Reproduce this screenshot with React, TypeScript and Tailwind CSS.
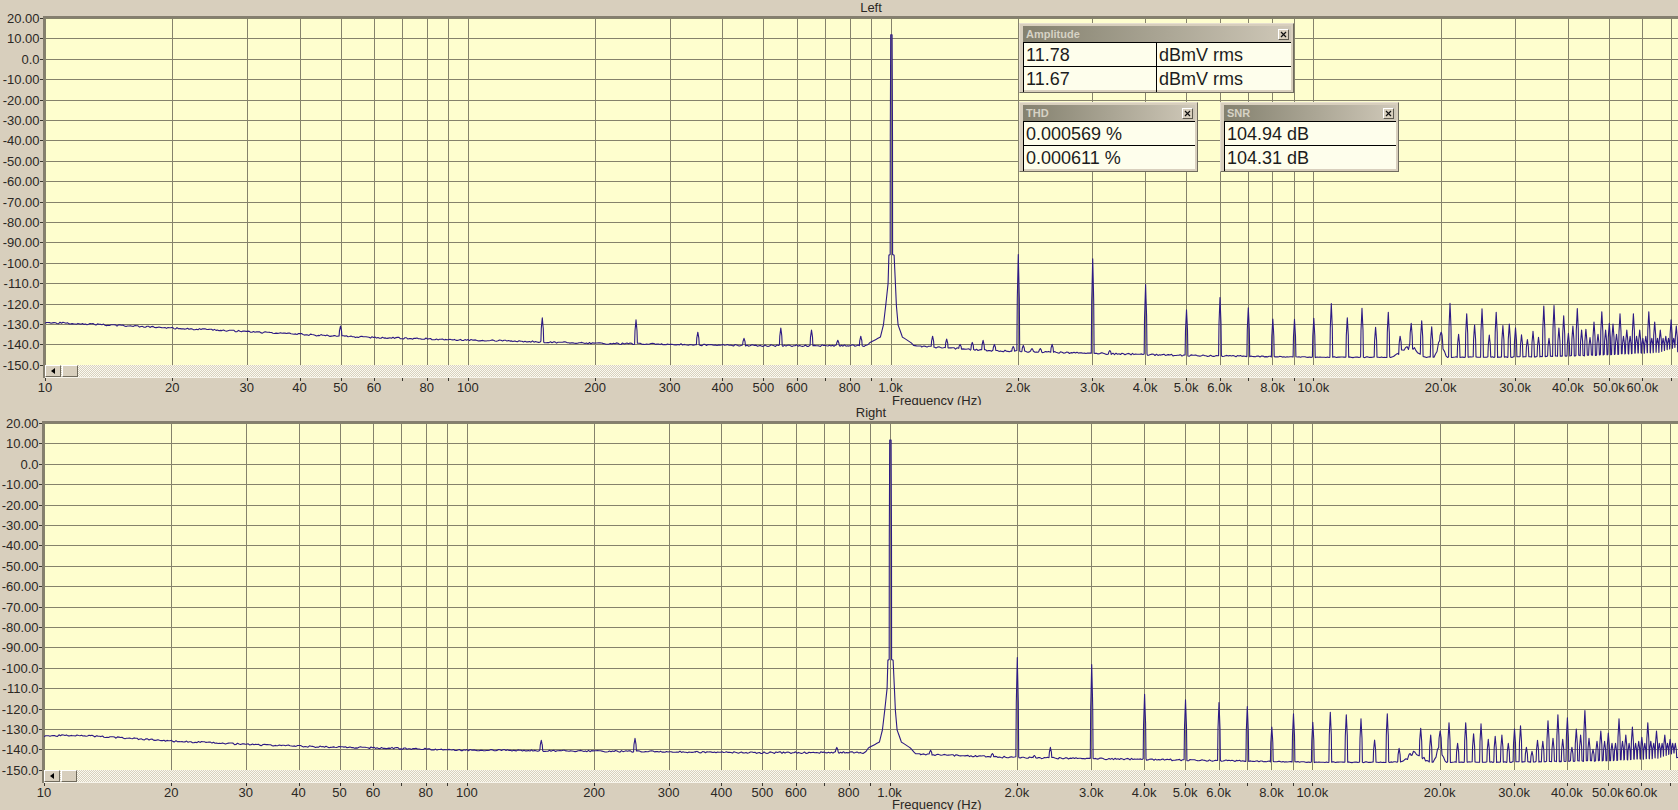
const DECADE = 422.8;
const DB_PX = 2.04;
const PLOT_W = 1640;
const PLOT_H = 347;

const GRID_FREQS = [
  10, 20, 30, 40, 50, 60, 70, 80, 90, 100, 200, 300, 400, 500, 600, 700, 800, 900, 1000, 2000, 3000, 4000, 5000, 6000,
  7000, 8000, 9000, 10000, 20000, 30000, 40000, 50000, 60000, 70000,
];
const X_LABELS: [number, string][] = [
  [10, "10"], [20, "20"], [30, "30"], [40, "40"], [50, "50"], [60, "60"], [80, "80"], [100, "100"],
  [200, "200"], [300, "300"], [400, "400"], [500, "500"], [600, "600"], [800, "800"],
  [1000, "1.0k"], [2000, "2.0k"], [3000, "3.0k"], [4000, "4.0k"], [5000, "5.0k"], [6000, "6.0k"], [8000, "8.0k"],
  [10000, "10.0k"], [20000, "20.0k"], [30000, "30.0k"], [40000, "40.0k"], [50000, "50.0k"], [60000, "60.0k"],
];
const Y_LABELS = [
  "20.00", "10.00", "0.0", "-10.00", "-20.00", "-30.00", "-40.00", "-50.00", "-60.00", "-70.00", "-80.00", "-90.00",
  "-100.0", "-110.0", "-120.0", "-130.0", "-140.0", "-150.0",
];

// measured off the plots: [freq, dB]
const LEFT = {
  top: 11.78,
  floor: [
    [10, -129.3], [12, -129.8], [20, -132], [30, -133.7], [40, -135], [50, -136], [60, -136.6], [100, -137.8], [200, -139.5],
    [500, -140.6], [800, -140.6], [1200, -141], [1700, -143], [3000, -144.4], [5000, -145.4], [10000, -146.3], [30000, -146.2],
    [45000, -145.4], [70000, -143.6],
  ],
  bumps: [[16800, 16, 6], [20000, 6, 9]],
  spurs: [
    [50, -131], [150, -127], [250, -128], [350, -134], [450, -137], [550, -132], [650, -133], [750, -138], [850, -136],
    [1257, -136], [1357, -137.4], [1460, -140], [1560, -139], [1655, -138], [1760, -140], [1950, -141], [2060, -140.5],
    [2160, -142], [2260, -142], [2410, -140], [3300, -143],
  ],
  harmonics: [
    -96, -98, -110.7, -123, -117, -122, -127.6, -127.7, -127.2, -120, -127, -122.3, -131.6, -124.3, -136, -129.7, -128.5,
    -131.3, -134, -119.9, -135, -125, -130.5, -122.6, -135.4, -124.2, -130.8, -130, -131.8, -135.3, -137.6, -133.6, -136.5,
    -121.2, -137, -121, -132, -126, -134.5, -131, -122.4, -133, -132.6, -136.6, -129, -135, -124, -133, -129.7, -130, -135,
    -125, -136, -133, -136, -125, -136, -133, -137, -136, -124, -137, -129, -137, -133, -137, -136, -137, -128, -137, -131,
  ],
};

const RIGHT = {
  top: 11.67,
  floor: [
    [10, -133.4], [12, -133], [20, -135.9], [30, -137.5], [40, -138.4], [50, -139], [60, -139.2], [100, -140.3], [500, -141.6],
    [800, -141.5], [1200, -142.4], [2000, -144], [5000, -145.2], [10000, -146.3], [30000, -146.2], [50000, -145.5], [70000, -144],
  ],
  bumps: [[17500, 14, 5], [20000, 6, 8]],
  spurs: [
    [50, -138.6], [150, -135.6], [250, -134.6], [350, -141], [750, -139], [1250, -140.4], [1750, -142], [2200, -143], [2400, -139],
  ],
  harmonics: [
    -95, -98.4, -113, -115.7, -117, -119, -129, -122.6, -126.7, -121.8, -123, -125, -135.4, -122.6, -139.5, -142, -129.7, -133,
    -131, -126.9, -137, -127, -132.4, -127.5, -135, -133.6, -133, -137, -130, -128.5, -139, -141, -135.5, -136, -126, -134.5,
    -123, -135, -124.5, -139, -130, -133, -121, -134.5, -140, -136, -131, -136, -132, -137, -137, -125, -136, -133, -137, -129,
    -137, -136, -134, -137, -127, -136, -137, -131, -137, -137, -133, -137, -135, -137, -137,
  ],
};

// skirt of the 1 kHz fundamental: [px from centre, dB], the top is filled in per channel
const SKIRT = [
  [-30, -145], [-22, -139.3], [-11, -136.4], [-8, -130.5], [-5.7, -121], [-3.3, -110], [-2.5, -96.2], [-1.2, -96], [-1.1, -38],
  [-0.7, 0], [0.7, 0], [1.1, -38], [1.2, -96], [2.7, -96.2], [4, -110], [5, -121], [6.7, -130.5], [11, -136.4], [20, -139.3], [30, -145],
];

const px = (f: number) => (Math.log10(f) - 1) * DECADE;
const py = (db: number) => (20 - db) * DB_PX;
const rnd = (n: number) => {
  const v = Math.sin(n * 12.9898) * 43758.5453;
  return v - Math.floor(v);
};

function lerp(points: number[][], x: number) {
  if (x <= points[0][0]) return points[0][1];
  for (let i = 1; i < points.length; i++) {
    if (x <= points[i][0]) {
      const [x0, y0] = points[i - 1];
      const [x1, y1] = points[i];
      return y0 + ((y1 - y0) * (x - x0)) / (x1 - x0);
    }
  }
  return points[points.length - 1][1];
}

function buildTrace(ch: typeof LEFT) {
  const floorPts = ch.floor.map(([f, db]) => [px(f), db]);
  const bumps = ch.bumps.map(([f, w, h]) => [px(f), w, h]);
  const peaks = [
    ...ch.spurs.map(([f, db]) => [px(f), db]),
    ...ch.harmonics.map((db, i) => [px((i + 2) * 1000) + 0.4, db]),
  ];
  const centre = px(1000) + 0.8;
  const skirt = SKIRT.map(([d, db]) => [centre + d, Math.abs(d) === 0.7 ? ch.top : db]);

  const xs = new Set<number>();
  for (let x = 0; x < PLOT_W; x += 1.5) xs.add(x);
  peaks.forEach(([x]) => [-1.4, -1, 0, 1, 1.4].forEach((d) => xs.add(x + d)));
  skirt.forEach(([x]) => xs.add(x));

  const floorAt = (x: number) => {
    let v = lerp(floorPts, x);
    bumps.forEach(([c, w, h]) => {
      const d = Math.abs(x - c);
      if (d < w) v += h * (1 - d / w) * (0.5 + rnd(Math.round(x)) * 0.8);
    });
    return v;
  };

  const pts = [...xs].sort((a, b) => a - b).map((x) => {
    const base = floorAt(x);
    let v = base + (rnd(Math.round(x * 2)) - 0.5) * (x < 1200 ? 0.8 : 0.4);
    for (const [c, db] of peaks) {
      const d = Math.abs(x - c);
      if (d >= 1.4) continue;
      const mid = base + (db - base) * 0.55;
      const s = d <= 1 ? db + ((mid - db) * d) / 1 : mid + ((base - mid) * (d - 1)) / 0.4;
      v = Math.max(v, s);
    }
    if (x > skirt[0][0] && x < skirt[skirt.length - 1][0]) v = Math.max(v, lerp(skirt, x));
    return `${x.toFixed(1)},${py(v).toFixed(1)}`;
  });
  return pts.join(" ");
}

function Plot({ channel }: { channel: typeof LEFT }) {
  return (
    <svg width={PLOT_W} height={PLOT_H} className="block bg-[#fefece]">
      {Y_LABELS.map((_, i) => {
        const y = Math.round(i * 10 * DB_PX) + 0.5;
        return <line key={i} x1={0} x2={PLOT_W} y1={y} y2={y} stroke="#85826b" />;
      })}
      {GRID_FREQS.map((f) => {
        const x = Math.round(px(f)) + 0.5;
        return <line key={f} x1={x} x2={x} y1={0} y2={PLOT_H} stroke="#85826b" />;
      })}
      <polyline points={buildTrace(channel)} fill="none" stroke="#2d1a84" strokeWidth={1.1} strokeLinejoin="round" />
    </svg>
  );
}

function YAxis({ width }: { width: number }) {
  return (
    <svg width={width} height={PLOT_H} className="mt-[2px] block shrink-0 overflow-visible fill-[#2b2824] text-[13px]">
      {Y_LABELS.map((label, i) => {
        const y = Math.round(i * 10 * DB_PX) + 0.5;
        return (
          <g key={label}>
            <text x={width - 3.5} y={y + 4.5} textAnchor="end">{label}</text>
            <line x1={width - 3} x2={width} y1={y} y2={y} stroke="#3a3730" />
          </g>
        );
      })}
    </svg>
  );
}

function XAxis({ origin, unitY }: { origin: number; unitY: number }) {
  return (
    <svg width={1678} height={27} className="block fill-[#2b2824] text-[13px]">
      {GRID_FREQS.map((f) => {
        const x = Math.round(px(f)) + origin + 0.5;
        return <line key={f} x1={x} x2={x} y1={0} y2={3} stroke="#3a3730" />;
      })}
      {X_LABELS.map(([f, label]) => (
        <text key={f} x={px(f) + origin} y={14} textAnchor="middle">{label}</text>
      ))}
      <text x={892} y={unitY}>Frequency (Hz)</text>
    </svg>
  );
}

function ScrollBar() {
  return (
    <div className="flex h-[12px] items-stretch bg-[repeating-conic-gradient(#d8d0be_0_25%,#fbfaf0_0_50%)] bg-[length:2px_2px]">
      <div className="flex w-[16px] items-center justify-center border border-t-white border-l-white border-r-[#6f6a5c] border-b-[#6f6a5c] bg-[#d8cfbd]">
        <div className="h-0 w-0 border-y-[3px] border-r-[4px] border-y-transparent border-r-black" />
      </div>
      <div className="ml-px w-[16px] border border-t-white border-l-white border-r-[#6f6a5c] border-b-[#6f6a5c] bg-[#d8cfbd]" />
    </div>
  );
}

function Chart({ title, channel, axisWidth, plotLeft, unitY }: {
  title: string;
  channel: typeof LEFT;
  axisWidth: number;
  plotLeft: number;
  unitY: number;
}) {
  return (
    <section>
      <div className="h-[16px] pl-[64px] text-center text-[13px] leading-[15px] text-[#2b2824]">{title}</div>
      <div className="flex">
        <YAxis width={axisWidth} />
        <div className="min-w-0 flex-1 border-t-2 border-l-2 border-[#857f6f]">
          <div className="overflow-hidden">
            <Plot channel={channel} />
          </div>
          <ScrollBar />
          <div className="h-px bg-[#f7f4ea]" />
        </div>
      </div>
      <XAxis origin={plotLeft} unitY={unitY} />
    </section>
  );
}

function StatWindow({ title, rows, className, cols }: {
  title: string;
  rows: string[][];
  className: string;
  cols: string;
}) {
  return (
    <div className={`absolute border border-t-[#e6dfd0] border-l-[#e6dfd0] border-r-[#6f6b5e] border-b-[#6f6b5e] bg-[#d8cfbd] pt-[2px] pr-[2px] pb-[2px] pl-[3px] ${className}`}>
      <div className="flex h-[16px] items-center justify-between bg-gradient-to-r from-[#84816f] to-[#cfc8b8] pr-[2px] pl-[3px]">
        <span className="text-[11px] leading-none font-bold text-[#d6d2c4]">{title}</span>
        <span className="flex h-[11px] w-[11px] items-center justify-center border border-t-white border-l-white border-r-[#5f5b50] border-b-[#5f5b50] bg-[#d8cfbd]">
          <svg width="7" height="7" viewBox="0 0 7 7" className="block">
            <path d="M1 1l5 5M6 1l-5 5" stroke="#111" strokeWidth="1.2" />
          </svg>
        </span>
      </div>
      <div className="bg-[#fefeec] text-[18px] leading-[25px] text-[#1c1c1c]">
        {rows.map((row) => (
          <div key={row[0]} className={`grid h-[24px] border-t border-black ${cols}`}>
            {row.map((cell) => (
              <div key={cell} className="border-l border-black pl-[2px]">{cell}</div>
            ))}
          </div>
        ))}
      </div>
    </div>
  );
}

export default function App() {
  return (
    <div className="relative h-[810px] w-[1678px] overflow-hidden bg-[#d8cfbd] font-['Liberation_Sans',Arial,sans-serif]">
      <Chart title="Left" channel={LEFT} axisWidth={43} plotLeft={45} unitY={27} />
      <Chart title="Right" channel={RIGHT} axisWidth={42} plotLeft={44} unitY={26} />

      <StatWindow
        title="Amplitude"
        rows={[["11.78", "dBmV rms"], ["11.67", "dBmV rms"]]}
        className="top-[23px] left-[1019px] w-[275px]"
        cols="grid-cols-[133px_1fr]"
      />
      <StatWindow
        title="THD"
        rows={[["0.000569 %"], ["0.000611 %"]]}
        className="top-[102px] left-[1019px] w-[179px]"
        cols="grid-cols-1"
      />
      <StatWindow
        title="SNR"
        rows={[["104.94 dB"], ["104.31 dB"]]}
        className="top-[102px] left-[1220px] w-[179px]"
        cols="grid-cols-1"
      />
    </div>
  );
}
